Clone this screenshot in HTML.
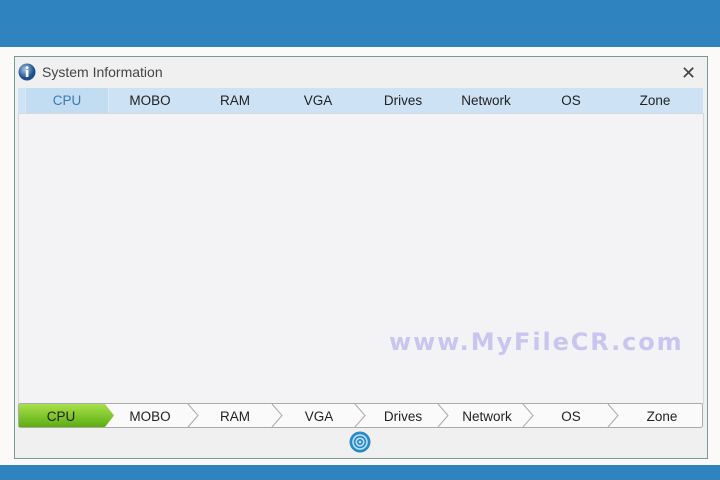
<!DOCTYPE html>
<html><head><style>
body{margin:0;width:720px;height:480px;overflow:hidden;background:#fbfaf9;font-family:"Liberation Sans",sans-serif;position:relative}
.abs{position:absolute}
.t{position:absolute;font-size:13.5px;color:#222;transform:translateX(-50%)}
</style></head><body>
<div class="abs" style="left:0;top:0;width:720px;height:47px;background:#2f84c0"></div>
<div class="abs" style="left:0;top:465px;width:720px;height:15px;background:#2f84c0"></div>
<div class="abs" style="left:14px;top:56px;width:692px;height:401px;background:#f0f0f0;border:1px solid #7a9a9a"></div>
<svg class="abs" style="left:18px;top:63px" width="18" height="18"><defs><radialGradient id="g" cx="40%" cy="35%"><stop offset="0" stop-color="#a9c8e8"/><stop offset="1" stop-color="#1f4f8a"/></radialGradient></defs><circle cx="9" cy="9" r="8.5" fill="url(#g)"/><rect x="7.8" y="7" width="2.6" height="7" fill="#fff"/><circle cx="9.1" cy="4.6" r="1.4" fill="#fff"/></svg>
<div class="abs" style="left:42px;top:64px;font-size:14px;color:#444">System Information</div>
<div class="abs" style="left:681px;top:63px;font-size:18px;color:#444">✕</div>
<div class="abs" style="left:18px;top:88px;width:685px;height:25px;background:#cde2f5"></div>
<div class="abs" style="left:25px;top:88px;width:82px;height:25px;background:#c2dcf2;border-right:1px solid #d9e9f7;border-left:1px solid #d9e9f7"></div>
<div class="abs" style="left:18px;top:113px;width:684px;height:289px;background:#f3f3f5;border:1px solid #d8d8d8"></div>
<div class="t" style="left:67px;top:93px;color:#3b7bb0">CPU</div>
<div class="t" style="left:150px;top:93px">MOBO</div>
<div class="t" style="left:235px;top:93px">RAM</div>
<div class="t" style="left:318px;top:93px">VGA</div>
<div class="t" style="left:403px;top:93px">Drives</div>
<div class="t" style="left:486px;top:93px">Network</div>
<div class="t" style="left:571px;top:93px">OS</div>
<div class="t" style="left:655px;top:93px">Zone</div>
<div class="abs" style="left:389px;top:328px;font-size:24px;font-weight:bold;color:#c8c6ef;letter-spacing:1.9px;font-family:'DejaVu Sans',sans-serif">www.MyFileCR.com</div>
<svg class="abs" style="left:18px;top:403px" width="686" height="26">
<defs><linearGradient id="gr" x1="0" y1="0" x2="0" y2="1"><stop offset="0" stop-color="#a8e04a"/><stop offset="1" stop-color="#5cae12"/></linearGradient></defs>
<rect x="0.5" y="0.5" width="684" height="24" rx="2" fill="#fafafa" stroke="#aaa"/>
<path d="M1 1H87L96 12.5L87 24H1Z" fill="url(#gr)"/>
<g fill="none" stroke="#aaa"><path d="M170 1l10 11.5L170 24"/><path d="M254 1l10 11.5L254 24"/><path d="M337 1l10 11.5L337 24"/><path d="M420 1l10 11.5L420 24"/><path d="M505 1l10 11.5L505 24"/><path d="M590 1l10 11.5L590 24"/></g>
</svg>
<div class="t" style="left:61px;top:409px">CPU</div>
<div class="t" style="left:150px;top:409px">MOBO</div>
<div class="t" style="left:235px;top:409px">RAM</div>
<div class="t" style="left:319px;top:409px">VGA</div>
<div class="t" style="left:403px;top:409px">Drives</div>
<div class="t" style="left:487px;top:409px">Network</div>
<div class="t" style="left:571px;top:409px">OS</div>
<div class="t" style="left:662px;top:409px">Zone</div>
<svg class="abs" style="left:349px;top:431px" width="22" height="22"><circle cx="11" cy="11" r="10.5" fill="#2a8ac4"/><circle cx="11" cy="11" r="7" fill="none" stroke="#bfe3f5" stroke-width="1.5"/><circle cx="11" cy="11" r="3.8" fill="none" stroke="#bfe3f5" stroke-width="1.5"/><circle cx="11" cy="11" r="1.3" fill="#bfe3f5"/></svg>
</body></html>
